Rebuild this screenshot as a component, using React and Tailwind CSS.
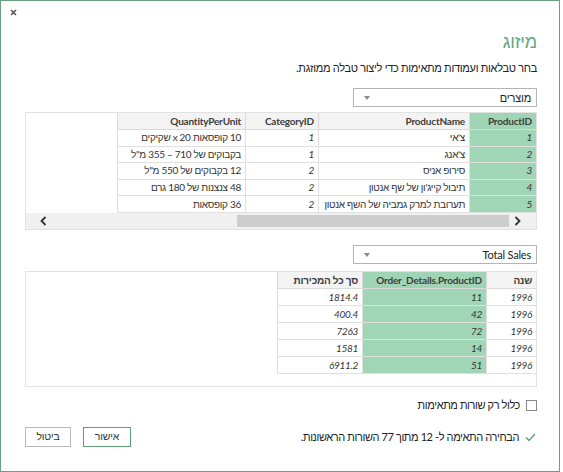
import React from "react";

const F = "font-['Lato','Liberation_Sans','DejaVu_Sans',sans-serif]";

function Caret() {
  return (
    <svg width="6" height="4" viewBox="0 0 6 4" className="shrink-0">
      <path d="M0 0 L6 0 L3 4 Z" fill="#8a8a8a" />
    </svg>
  );
}

function Dropdown({ label }) {
  return (
    <div className="flex justify-start">
      <div className="w-[184px] h-[19px] border border-[#b4b4b4] bg-white flex items-center justify-between pr-[5px] pl-[10px]">
        <span className="text-[11px] tracking-[-0.2px] leading-none text-[#222]">{label}</span>
        <Caret />
      </div>
    </div>
  );
}

const t1Cols = [
  { w: "w-[67px]", green: true, italic: true, head: "ProductID" },
  { w: "w-[151px]", head: "ProductName" },
  { w: "w-[73px]", italic: true, head: "CategoryID" },
  { w: "w-[128px]", head: "QuantityPerUnit" },
];

const t1Rows = [
  ["1", "צ'אי", "1", "10 קופסאות x 20 שקיקים"],
  ["2", "צ'אנג", "1", 'בקבוקים של 710 – 355 מ"ל'],
  ["3", "סירופ אניס", "2", '12 בקבוקים של 550 מ"ל'],
  ["4", "תיבול קייג'ון של שף אנטון", "2", "48 צנצנות של 180 גרם"],
  ["5", "תערובת למרק גמביה של השף אנטון", "2", "36 קופסאות"],
];

const t2Cols = [
  { w: "w-[50px]", italic: true, head: "שנה" },
  { w: "w-[124px]", green: true, italic: true, head: "Order_Details.ProductID" },
  { w: "w-[85px]", italic: true, head: "סך כל המכירות" },
];

const t2Rows = [
  ["1996", "11", "1814.4"],
  ["1996", "42", "400.4"],
  ["1996", "72", "7263"],
  ["1996", "14", "1581"],
  ["1996", "51", "6911.2"],
];

function HeadRow({ cols, h }) {
  return (
    <div className={`flex ${h} border-b border-[#dadada]`}>
      {cols.map((c, i) => (
        <div
          key={i}
          className={`${c.w} shrink-0 border-l border-[#dadada] flex items-center px-[4px] text-[10px] tracking-[-0.2px] font-bold text-[#3c3c3c] whitespace-nowrap overflow-hidden ${
            c.green ? "bg-[#9fd5b5]" : "bg-[#f3f3f3]"
          }`}
        >
          {c.head}
        </div>
      ))}
    </div>
  );
}

function BodyRow({ cols, row, h }) {
  return (
    <div className={`flex ${h} border-b border-[#e0e0e0]`}>
      {cols.map((c, i) => (
        <div
          key={i}
          className={`${c.w} shrink-0 border-l border-[#e0e0e0] flex items-center px-[4px] text-[10px] tracking-[-0.3px] text-[#333] whitespace-nowrap overflow-hidden ${
            c.green ? "bg-[#a0d6b6]" : "bg-white"
          } ${c.italic ? "italic" : ""}`}
        >
          <span dir="rtl">{row[i]}</span>
        </div>
      ))}
    </div>
  );
}

function ChevLeft() {
  return (
    <svg width="7" height="10" viewBox="0 0 7 10">
      <path d="M5.5 1 L1.5 5 L5.5 9" fill="none" stroke="#333" strokeWidth="1.8" />
    </svg>
  );
}
function ChevRight() {
  return (
    <svg width="7" height="10" viewBox="0 0 7 10">
      <path d="M1.5 1 L5.5 5 L1.5 9" fill="none" stroke="#333" strokeWidth="1.8" />
    </svg>
  );
}

export default function App() {
  return (
    <div className={`w-[563px] h-[472px] bg-white ${F}`}>
      <div dir="rtl" className="relative w-[560px] h-[472px] border border-[#6aa07f] bg-white flex flex-col pr-[22px] pl-[24px] pt-[29px]">
        <div className="absolute top-[8px] left-[9px]">
          <svg width="7" height="7" viewBox="0 0 7 7">
            <path d="M1 1 L6 6 M6 1 L1 6" stroke="#555" strokeWidth="1.6" />
          </svg>
        </div>

        <div className="h-[26px] leading-[23px] text-[18px] font-normal tracking-[-0.2px] text-[#62a880]">מיזוג</div>
        <div className="mt-[4px] h-[16px] leading-[16px] text-[11px] tracking-[-0.3px] text-[#222]">
          בחר טבלאות ועמודות מתאימות כדי ליצור טבלה ממוזגת.
        </div>

        <div className="mt-[12px]">
          <Dropdown label="מוצרים" />
        </div>

        <div className="mt-[5px] h-[118px] border border-[#e2e2e2] flex flex-col">
          <div className="flex-1 flex">
            <div className="flex flex-col">
              <HeadRow cols={t1Cols} h="h-[17px]" />
              {t1Rows.map((r, i) => (
                <BodyRow key={i} cols={t1Cols} row={r} h="h-[16.6px]" />
              ))}
            </div>
          </div>
          <div className="h-[16px] bg-[#f0f0f0] flex items-center justify-between pr-[15px] pl-[14px]">
            <ChevRight />
            <div className="flex-1 h-[12px] flex justify-start pr-[5px]">
              <div className="w-[272px] h-[12px] bg-[#cdcdcd]" />
            </div>
            <ChevLeft />
          </div>
        </div>

        <div className="mt-[15px]">
          <Dropdown label="Total Sales" />
        </div>

        <div className="mt-[7px] h-[116px] border border-[#e2e2e2] flex">
          <div className="flex flex-col">
            <HeadRow cols={t2Cols} h="h-[17px]" />
            {t2Rows.map((r, i) => (
              <BodyRow key={i} cols={t2Cols} row={r} h="h-[17px]" />
            ))}
          </div>
        </div>

        <div className="mt-[12px] flex items-center gap-[6px] h-[12px]">
          <div className="w-[11px] h-[11px] border border-[#8a8a8a] bg-white shrink-0" />
          <span className="text-[11px] tracking-[-0.4px] text-[#222]">כלול רק שורות מתאימות</span>
        </div>

        <div className="mt-[16px] flex items-center justify-between h-[20px]">
          <div className="flex items-center gap-[6px] pr-[1px]">
            <svg width="11" height="9" viewBox="0 0 11 9" className="shrink-0">
              <path d="M1 4.5 L4 7.5 L10 1" fill="none" stroke="#5a9f75" strokeWidth="1.3" />
            </svg>
            <span className="text-[11px] tracking-[-0.4px] text-[#222]">הבחירה התאימה ל- 12 מתוך 77 השורות הראשונות.</span>
          </div>
          <div className="flex items-center gap-[12px]">
            <div className="w-[48px] h-[20px] border border-[#5e9e77] flex items-center justify-center text-[10.5px] tracking-[-0.2px] text-[#333] bg-white">
              אישור
            </div>
            <div className="w-[46px] h-[20px] border border-[#b9b9b9] flex items-center justify-center text-[10.5px] tracking-[-0.2px] text-[#333] bg-white">
              ביטול
            </div>
          </div>
        </div>
      </div>
    </div>
  );
}
